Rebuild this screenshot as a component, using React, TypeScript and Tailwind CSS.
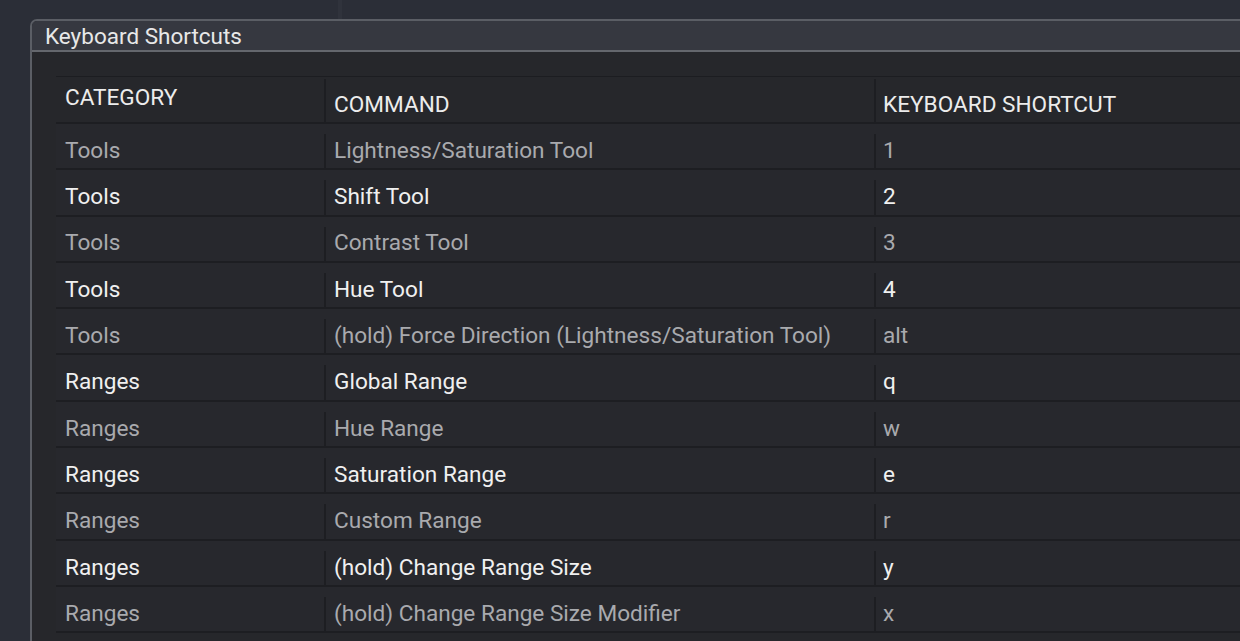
import React from "react";

const rows: [string, string, string][] = [
  ["Tools", "Lightness/Saturation Tool", "1"],
  ["Tools", "Shift Tool", "2"],
  ["Tools", "Contrast Tool", "3"],
  ["Tools", "Hue Tool", "4"],
  ["Tools", "(hold) Force Direction (Lightness/Saturation Tool)", "alt"],
  ["Ranges", "Global Range", "q"],
  ["Ranges", "Hue Range", "w"],
  ["Ranges", "Saturation Range", "e"],
  ["Ranges", "Custom Range", "r"],
  ["Ranges", "(hold) Change Range Size", "y"],
  ["Ranges", "(hold) Change Range Size Modifier", "x"],
];

export default function App() {
  return (
    <div className="w-[1240px] h-[641px] bg-[#2b2e37] overflow-hidden font-['Roboto',sans-serif]">
      <div className="h-[19px] flex">
        <div className="w-[338px]" />
        <div className="w-[4px] bg-[#30333c]" />
      </div>
      <div className="ml-[30px] w-[1260px] h-[622px] rounded-tl-[7px] border-l-2 border-t-2 border-[#5b5e65] bg-[#26272b] overflow-hidden">
        <div className="h-[31px] bg-[#363840] border-b-2 border-[#64676d] flex items-center pl-[13px] pt-[2px] text-[22.5px] text-[#e8e8e8] leading-none">
          Keyboard Shortcuts
        </div>
        <div className="pt-[24px] pl-[24px]">
          <div className="border-t border-[#1c1d21]">
            <div className="flex h-[47px] border-b-2 border-[#1d1e22] text-[22.6px] text-[#ececec] leading-none">
              <div className="w-[268px] pl-[9px] pt-[10px]">CATEGORY</div>
              <div className="w-[550px] pl-[8px] pt-[15px] border-l-2 border-[#1d1e22] mt-[2px]">COMMAND</div>
              <div className="flex-1 pl-[7px] pt-[15px] border-l-2 border-[#1d1e22] mt-[2px]">KEYBOARD SHORTCUT</div>
            </div>
            {rows.map((r, i) => (
              <div
                key={i}
                className={
                  "flex h-[46.3px] border-b-2 border-[#1d1e22] bg-[#27282d] text-[22.6px] leading-none items-center pt-[10px] " +
                  (i % 2 === 0 ? "text-[#a9aaae]" : "text-[#f0f0f0]")
                }
              >
                <div className="w-[268px] pl-[9px] h-full flex items-center">{r[0]}</div>
                <div className="w-[550px] pl-[8px] h-full flex items-center border-l-2 border-[#1d1e22]">{r[1]}</div>
                <div className="flex-1 pl-[7px] h-full flex items-center border-l-2 border-[#1d1e22]">{r[2]}</div>
              </div>
            ))}
          </div>
        </div>
      </div>
    </div>
  );
}
